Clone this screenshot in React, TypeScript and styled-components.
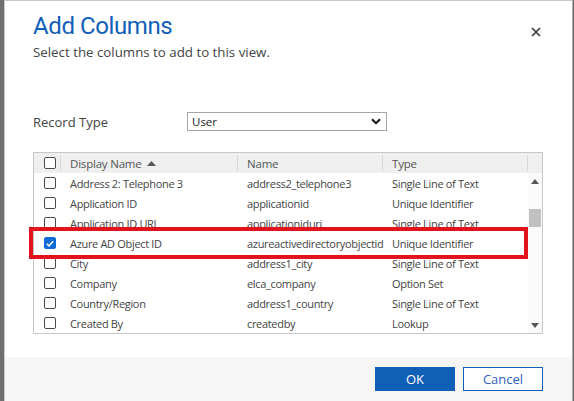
import React from "react";
import styled, { createGlobalStyle } from "styled-components";

const GlobalStyle = createGlobalStyle`
  html, body {
    margin: 0;
    padding: 0;
    background: #6f6f6f;
  }
  body {
    font-family: "Open Sans", "Noto Sans", sans-serif;
  }
`;

type Row = { label: string; name: string; type: string; checked?: boolean };

const rows: Row[] = [
  { label: "Address 2: Telephone 3", name: "address2_telephone3", type: "Single Line of Text" },
  { label: "Application ID", name: "applicationid", type: "Unique Identifier" },
  { label: "Application ID URI", name: "applicationiduri", type: "Single Line of Text" },
  { label: "Azure AD Object ID", name: "azureactivedirectoryobjectid", type: "Unique Identifier", checked: true },
  { label: "City", name: "address1_city", type: "Single Line of Text" },
  { label: "Company", name: "elca_company", type: "Option Set" },
  { label: "Country/Region", name: "address1_country", type: "Single Line of Text" },
  { label: "Created By", name: "createdby", type: "Lookup" },
];

const App = () => {
  return (
    <>
      <GlobalStyle />
      <Page>
        <Dialog>
          <Body>
            <Header>
              <Title>Add Columns</Title>
              <Close>
                <svg width="10" height="10" viewBox="0 0 10 10">
                  <path d="M1 1L9 9M9 1L1 9" stroke="#3a3a3a" strokeWidth="1.7" />
                </svg>
              </Close>
            </Header>
            <Subtitle>Select the columns to add to this view.</Subtitle>

            <Field>
              <FieldLabel>Record Type</FieldLabel>
              <Select>
                <span>User</span>
                <svg width="10" height="7" viewBox="0 0 10 7">
                  <path d="M1 1.2L5 5.2L9 1.2" stroke="#111" strokeWidth="2" fill="none" />
                </svg>
              </Select>
            </Field>

            <GridWrap>
              <Grid>
                <HeadRow>
                  <CheckCell $sep>
                    <Check />
                  </CheckCell>
                  <HeadCell $sep>
                    Display Name
                    <SortArrow width="9" height="5" viewBox="0 0 9 5">
                      <path d="M0 5L4.5 0L9 5Z" fill="#555" />
                    </SortArrow>
                  </HeadCell>
                  <HeadCell $sep>Name</HeadCell>
                  <HeadCell $sep>Type</HeadCell>
                  <span />
                </HeadRow>
                <BodyArea>
                  <Rows>
                    {rows.map((r) => (
                      <DataRow key={r.name}>
                        <CheckCell>
                          <Check $checked={r.checked}>
                            {r.checked && (
                              <svg width="11" height="11" viewBox="0 0 11 11">
                                <path d="M2 5.8L4.4 8.2L9 3" stroke="#fff" strokeWidth="1.7" fill="none" />
                              </svg>
                            )}
                          </Check>
                        </CheckCell>
                        <Cell>{r.label}</Cell>
                        <Cell>{r.name}</Cell>
                        <Cell>{r.type}</Cell>
                      </DataRow>
                    ))}
                  </Rows>
                  <Scrollbar>
                    <ScrollArrow>
                      <svg width="8" height="5" viewBox="0 0 8 5">
                        <path d="M0 5L4 0L8 5Z" fill="#555" />
                      </svg>
                    </ScrollArrow>
                    <Track>
                      <Thumb />
                    </Track>
                    <ScrollArrow>
                      <svg width="8" height="5" viewBox="0 0 8 5">
                        <path d="M0 0L8 0L4 5Z" fill="#555" />
                      </svg>
                    </ScrollArrow>
                  </Scrollbar>
                </BodyArea>
              </Grid>
              <Highlight />
            </GridWrap>
          </Body>
          <Footer>
            <PrimaryButton>OK</PrimaryButton>
            <SecondaryButton>Cancel</SecondaryButton>
          </Footer>
        </Dialog>
      </Page>
    </>
  );
};

export default App;

const Page = styled.div`
  width: 574px;
  height: 401px;
  padding-left: 4px;
  box-sizing: border-box;
  background: #6f6f6f;
`;

const Dialog = styled.div`
  width: 569px;
  height: 401px;
  background: #fff;
  border-top: 1px solid #c8c8c8;
  border-left: 1px solid #c8c8c8;
  border-right: 1px solid #a8a8a8;
  box-sizing: border-box;
  display: flex;
  flex-direction: column;
`;

const Body = styled.div`
  flex: 1;
  padding: 9px 0 0 28px;
`;

const Header = styled.div`
  display: flex;
  justify-content: space-between;
  align-items: flex-start;
  width: 508px;
`;

const Title = styled.h1`
  margin: 0;
  font-family: Roboto, "Open Sans", sans-serif;
  font-size: 24px;
  font-weight: 400;
  color: #1160b7;
  line-height: 32px;
  letter-spacing: -0.4px;
`;

const Close = styled.div`
  margin-top: 17px;
  display: flex;
`;

const Subtitle = styled.p`
  margin: 1px 0 0;
  font-size: 13.3px;
  color: #444;
  line-height: 18px;
`;

const Field = styled.div`
  display: flex;
  align-items: center;
  margin-top: 51px;
`;

const FieldLabel = styled.div`
  width: 154px;
  font-size: 13px;
  color: #444;
`;

const Select = styled.div`
  width: 200px;
  height: 19px;
  box-sizing: border-box;
  border: 1px solid #a6a6a6;
  display: flex;
  align-items: center;
  justify-content: space-between;
  padding: 0 5px 0 4px;
  font-size: 11.5px;
  color: #222;
`;

const GridWrap = styled.div`
  position: relative;
  margin-top: 21px;
  width: 510px;
`;

const Grid = styled.div`
  border: 1px solid #c8c8c8;
  height: 182px;
  box-sizing: border-box;
  display: flex;
  flex-direction: column;
`;

const HeadRow = styled.div`
  display: grid;
  grid-template-columns: 27px 177px 145px 145px 1fr;
  height: 20px;
  background: #efefef;
  align-items: center;
`;

const HeadCell = styled.div<{ $sep?: boolean }>`
  height: 16px;
  display: flex;
  align-items: center;
  padding-left: 9px;
  font-size: 11.5px;
  letter-spacing: -0.2px;
  color: #555;
  border-right: ${(p) => (p.$sep ? "1px solid #d6d6d6" : "none")};
`;

const SortArrow = styled.svg`
  margin-left: 5px;
`;

const CheckCell = styled.div<{ $sep?: boolean }>`
  height: 16px;
  display: flex;
  align-items: center;
  padding-left: 10px;
  border-right: ${(p) => (p.$sep ? "1px solid #d6d6d6" : "none")};
`;

const Check = styled.span<{ $checked?: boolean }>`
  width: 12px;
  height: 12px;
  box-sizing: border-box;
  border-radius: 2px;
  border: 1px solid ${(p) => (p.$checked ? "#0f6cd6" : "#4a4a4a")};
  background: ${(p) => (p.$checked ? "#0f6cd6" : "#fff")};
  display: flex;
  align-items: center;
  justify-content: center;
`;

const BodyArea = styled.div`
  flex: 1;
  display: flex;
  overflow: hidden;
`;

const Rows = styled.div`
  flex: 1;
`;

const DataRow = styled.div`
  display: grid;
  grid-template-columns: 27px 177px 145px 145px;
  height: 20px;
  align-items: center;
`;

const Cell = styled.div`
  padding-left: 9px;
  font-size: 11px;
  letter-spacing: -0.32px;
  color: #444;
  white-space: nowrap;
`;

const Scrollbar = styled.div`
  width: 15px;
  background: #fafafa;
  display: flex;
  flex-direction: column;
  align-items: center;
  padding-right: 1px;
`;

const ScrollArrow = styled.div`
  height: 16px;
  display: flex;
  align-items: center;
`;

const Track = styled.div`
  flex: 1;
  width: 100%;
  padding-top: 20px;
`;

const Thumb = styled.div`
  width: 12px;
  margin-left: 1px;
  height: 18px;
  background: #c1c1c1;
`;

const Highlight = styled.div`
  position: absolute;
  left: -4px;
  top: 75px;
  width: 499px;
  height: 32px;
  box-sizing: border-box;
  border: 4px solid #e3131e;
  pointer-events: none;
`;

const Footer = styled.div`
  height: 44px;
  background: #f6f6f6;
  display: flex;
  justify-content: flex-end;
  align-items: center;
  gap: 8px;
  padding-right: 29px;
`;

const PrimaryButton = styled.button`
  width: 80px;
  height: 24px;
  border: 1px solid #1160b7;
  background: #1160b7;
  color: #fff;
  font-family: "Open Sans", sans-serif;
  font-size: 13px;
`;

const SecondaryButton = styled.button`
  width: 80px;
  height: 24px;
  border: 1px solid #1160b7;
  background: #fff;
  color: #2f5fc2;
  font-family: "Open Sans", sans-serif;
  font-size: 13px;
`;
